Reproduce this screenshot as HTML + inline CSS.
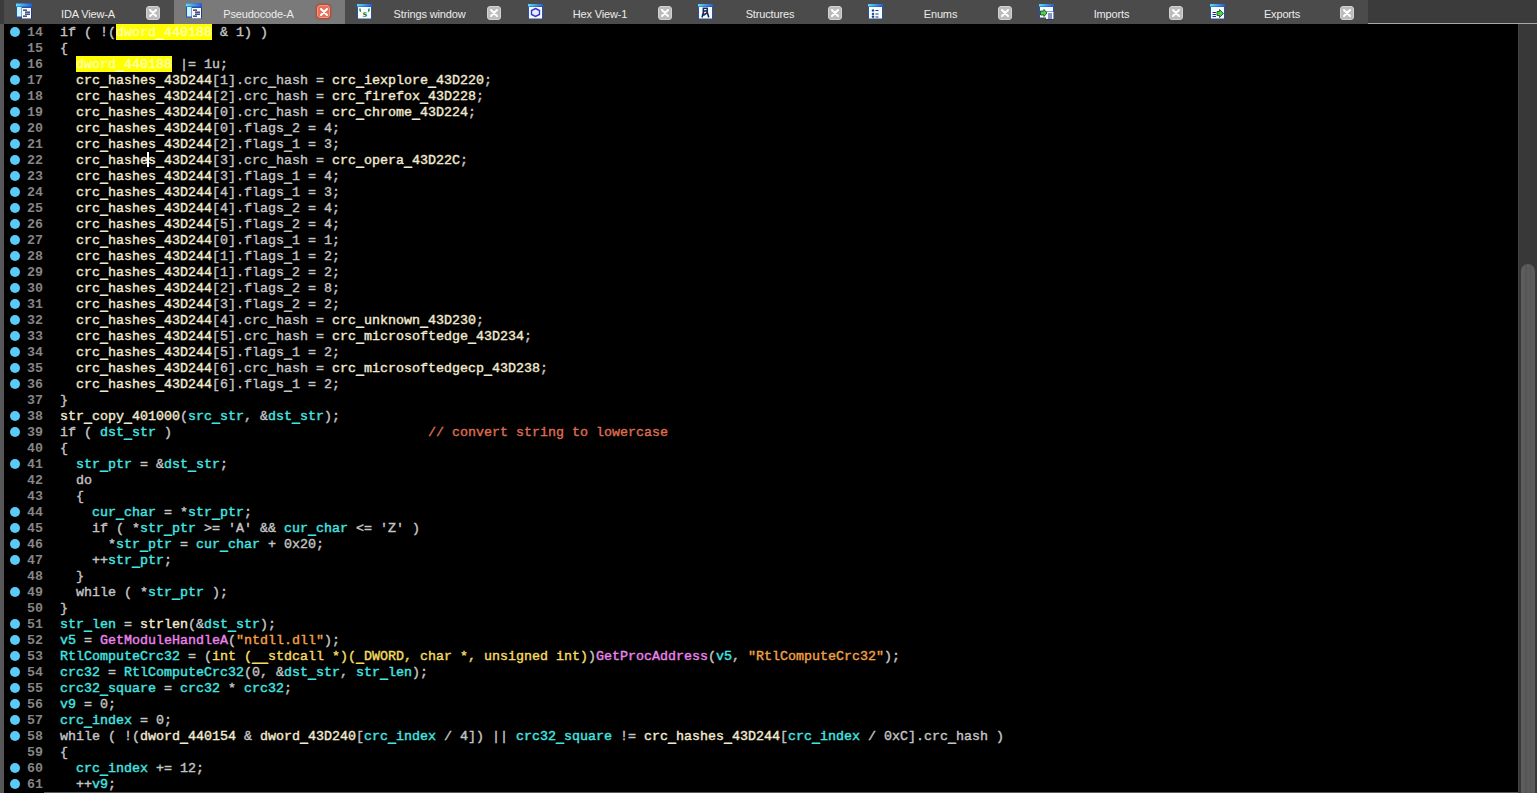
<!DOCTYPE html>
<html><head><meta charset="utf-8"><style>
*{margin:0;padding:0;box-sizing:border-box}
html,body{width:1537px;height:793px;overflow:hidden;background:#000}
body{position:relative;font-family:"Liberation Mono",monospace}
#bar{position:absolute;left:0;top:0;width:1537px;height:24px;background:#3b3b3b}
#barline{position:absolute;left:1368px;top:23px;width:169px;height:1px;background:#a8a8a8}
.tab{position:absolute;top:0;height:24px;background:#4b4b4b;font-family:"Liberation Sans",sans-serif;font-size:11px;color:#ececec;letter-spacing:-0.15px}
.tab.act{background:#7a7a7a}
.ic{position:absolute;left:12px;top:3px;width:17px;height:17px}
.ic svg{display:block}
.tt{position:absolute;left:-1px;width:100%;text-align:center;top:8px;line-height:13px}
.cl{position:absolute;left:142px;top:6px;width:14px;height:14px;border-radius:3px;background:#bcbcbc;border:1px solid #d2d2d2}
.cl.red{left:143px;top:5px;width:13px;height:13px;background:#e8705a;border-color:#f49a84;box-shadow:0 0 2px 1px #b84030}
.cl.red svg{left:-1.5px!important;top:-1.5px!important}
#lb{position:absolute;left:0;top:24px;width:4px;height:769px;background:#575757}
#ed{position:absolute;left:4px;top:24px;width:1514px;height:768px;background:#000}
#sb{position:absolute;left:1518px;top:24px;width:19px;height:769px;background:#383838;border-left:1px solid #444}
#th{position:absolute;left:1521px;top:264px;width:14px;height:529px;background:linear-gradient(90deg,#5e5e5e 0,#5c5c5c 4px,#565656 4px,#565656 6px,#5b5b5b 6px,#5b5b5b 9px,#565656 9px,#565656 10px,#5c5c5c 10px);border-radius:7px 7px 0 0}
#bl{position:absolute;left:44px;top:792px;width:1474px;height:1px;background:#5a5a5a}
.d{position:absolute;left:10px;width:10px;height:10px;border-radius:50%;background:#5ccaf6}
.n{position:absolute;left:24px;width:19px;text-align:right;font-weight:bold;color:#858585;font-size:13.333px;line-height:16px;height:16px}
.ln{position:absolute;left:60px;white-space:pre;font-weight:normal;-webkit-text-stroke-width:0.4px;font-size:13.333px;line-height:16px;height:16px;color:#c4c4c4}
.g{color:#f2ead0}
.l{color:#44e6e2}
.f{color:#ec84ee}
.s{color:#f2a046}
.t{color:#f4dc62}
.c{color:#de6c50}
.h{background:#ffff00;color:#ffffa8;display:inline-block;height:16px;vertical-align:top;margin-top:-1px;padding-top:1px}
#cur{position:absolute;left:147px;top:152px;width:2px;height:15px;background:#fff}
.ln u{text-decoration:none;position:relative;top:2px;text-shadow:0 -1px}
</style></head><body>
<div id="bar">
<div class="tab" style="left:4px;width:170px"><span class="ic"><svg width="17" height="17"><defs><linearGradient id="tg" x1="0" x2="1"><stop offset="0" stop-color="#58e0f8"/><stop offset="1" stop-color="#2a58d8"/></linearGradient></defs><rect x="0" y="0.5" width="16" height="14" fill="#2a4fa8"/><rect x="0" y="0.5" width="16" height="3" fill="url(#tg)"/><rect x="1" y="4" width="4.5" height="9.5" fill="#c8f6ff"/><rect x="6" y="5" width="9.5" height="11" fill="#1a2a70"/><rect x="6" y="5" width="9" height="10.5" fill="#fafcff"/><g fill="#1e3070"><rect x="7" y="6.5" width="4" height="1.3"/><rect x="9" y="8.5" width="5" height="1.3"/><rect x="9" y="10.5" width="5" height="1.3"/><rect x="7" y="12.5" width="4" height="1.3"/></g></svg></span><span class="tt">IDA View-A</span><span class="cl"><svg width="14" height="14" style="position:absolute;left:-1px;top:-1px"><path d="M4 4 L10 10 M10 4 L4 10" stroke="#fff" stroke-width="2" stroke-linecap="round"/></svg></span></div>
<div class="tab act" style="left:174px;width:171px"><span class="ic"><svg width="17" height="17"><defs><linearGradient id="tg" x1="0" x2="1"><stop offset="0" stop-color="#58e0f8"/><stop offset="1" stop-color="#2a58d8"/></linearGradient></defs><rect x="0" y="0.5" width="16" height="14" fill="#2a4fa8"/><rect x="0" y="0.5" width="16" height="3" fill="url(#tg)"/><rect x="1" y="4" width="4.5" height="9.5" fill="#c8f6ff"/><rect x="6" y="5" width="9.5" height="11" fill="#1a2a70"/><rect x="6" y="5" width="9" height="10.5" fill="#fafcff"/><g fill="#1e3070"><rect x="7" y="6.5" width="4" height="1.3"/><rect x="9" y="8.5" width="5" height="1.3"/><rect x="9" y="10.5" width="5" height="1.3"/><rect x="7" y="12.5" width="4" height="1.3"/></g></svg></span><span class="tt">Pseudocode-A</span><span class="cl red"><svg width="14" height="14" style="position:absolute;left:-1px;top:-1px"><path d="M4 4 L10 10 M10 4 L4 10" stroke="#fff" stroke-width="2" stroke-linecap="round"/></svg></span></div>
<div class="tab" style="left:345px;width:171px"><span class="ic"><svg width="17" height="17"><defs><linearGradient id="tg" x1="0" x2="1"><stop offset="0" stop-color="#58e0f8"/><stop offset="1" stop-color="#2a58d8"/></linearGradient></defs><rect x="0" y="1" width="15" height="15" fill="#2a4fa8"/><rect x="0" y="1" width="15" height="2.5" fill="url(#tg)"/><rect x="1" y="4" width="13" height="11.5" fill="#f4fcff"/><text x="7.8" y="13.6" font-family="Liberation Serif" font-size="11" font-weight="bold" fill="#1a6e1a" text-anchor="middle">s</text><path d="M3.2 5.5 Q2.5 7 3.6 8.6 M11.8 5.5 Q12.5 7 11.4 8.6" stroke="#1a6e1a" stroke-width="1.3" fill="none"/></svg></span><span class="tt">Strings window</span><span class="cl"><svg width="14" height="14" style="position:absolute;left:-1px;top:-1px"><path d="M4 4 L10 10 M10 4 L4 10" stroke="#fff" stroke-width="2" stroke-linecap="round"/></svg></span></div>
<div class="tab" style="left:516px;width:170px"><span class="ic"><svg width="17" height="17"><defs><linearGradient id="tg" x1="0" x2="1"><stop offset="0" stop-color="#58e0f8"/><stop offset="1" stop-color="#2a58d8"/></linearGradient></defs><rect x="0" y="1" width="15" height="15" fill="#2a4fa8"/><rect x="0" y="1" width="15" height="2.5" fill="url(#tg)"/><rect x="1" y="4" width="13" height="11.5" fill="#f4fcff"/><polygon points="7.5,5.5 11.5,7.5 11.5,11.5 7.5,13.5 3.5,11.5 3.5,7.5" fill="#e8ecff" stroke="#3a36c8" stroke-width="1.4"/></svg></span><span class="tt">Hex View-1</span><span class="cl"><svg width="14" height="14" style="position:absolute;left:-1px;top:-1px"><path d="M4 4 L10 10 M10 4 L4 10" stroke="#fff" stroke-width="2" stroke-linecap="round"/></svg></span></div>
<div class="tab" style="left:686px;width:170px"><span class="ic"><svg width="17" height="17"><defs><linearGradient id="tg" x1="0" x2="1"><stop offset="0" stop-color="#58e0f8"/><stop offset="1" stop-color="#2a58d8"/></linearGradient></defs><rect x="0" y="1" width="15" height="15" fill="#2a4fa8"/><rect x="0" y="1" width="15" height="2.5" fill="url(#tg)"/><rect x="1" y="4" width="13" height="11.5" fill="#f4fcff"/><rect x="5.3" y="5.3" width="4" height="2.6" fill="#fff" stroke="#182a58" stroke-width="1.5"/><path d="M5.6 8.5 L4.2 13.8 M9 8.5 L10.6 13.8 M5.8 12 L9 9.8" stroke="#182a58" stroke-width="1.6" fill="none" stroke-linecap="round"/></svg></span><span class="tt">Structures</span><span class="cl"><svg width="14" height="14" style="position:absolute;left:-1px;top:-1px"><path d="M4 4 L10 10 M10 4 L4 10" stroke="#fff" stroke-width="2" stroke-linecap="round"/></svg></span></div>
<div class="tab" style="left:856px;width:171px"><span class="ic"><svg width="17" height="17"><defs><linearGradient id="tg" x1="0" x2="1"><stop offset="0" stop-color="#58e0f8"/><stop offset="1" stop-color="#2a58d8"/></linearGradient></defs><rect x="0" y="1" width="15" height="15" fill="#2a4fa8"/><rect x="0" y="1" width="15" height="2.5" fill="url(#tg)"/><rect x="1" y="4" width="13" height="11.5" fill="#f4fcff"/><g fill="#1a3a80"><path d="M5 6 L6.5 7.5 L5 9 L3.5 7.5Z"/><path d="M5 9.5 L6.5 11 L5 12.5 L3.5 11Z"/><path d="M5 13 L6.5 14.5 L5 16 L3.5 14.5Z" transform="translate(0,-0.8)"/><rect x="7.5" y="7" width="3" height="1"/><rect x="7.5" y="10.5" width="3" height="1"/><rect x="7.5" y="13.5" width="3" height="1"/></g></svg></span><span class="tt">Enums</span><span class="cl"><svg width="14" height="14" style="position:absolute;left:-1px;top:-1px"><path d="M4 4 L10 10 M10 4 L4 10" stroke="#fff" stroke-width="2" stroke-linecap="round"/></svg></span></div>
<div class="tab" style="left:1027px;width:171px"><span class="ic"><svg width="17" height="17"><defs><linearGradient id="tg" x1="0" x2="1"><stop offset="0" stop-color="#58e0f8"/><stop offset="1" stop-color="#2a58d8"/></linearGradient></defs><rect x="0" y="1" width="15" height="14" fill="#2a4fa8"/><rect x="0" y="1" width="15" height="2.5" fill="url(#tg)"/><rect x="1" y="4" width="13" height="4" fill="#f4fcff"/><rect x="1" y="8" width="6" height="6.5" fill="#f4fcff"/><rect x="7" y="8.5" width="8" height="8" fill="#1a2a70"/><rect x="7" y="8.5" width="7.5" height="7.5" fill="#f4fcff"/><g fill="#1e2e88"><rect x="9" y="10.5" width="4" height="1"/><rect x="9" y="12.5" width="4" height="1"/><rect x="9" y="14.5" width="4" height="1"/></g><path d="M1.5 8 L5 8 L5 6.5 L8 10 L5 13.5 L5 12 L1.5 12 Z" fill="#50d050" stroke="#104010" stroke-width="0.8"/></svg></span><span class="tt">Imports</span><span class="cl"><svg width="14" height="14" style="position:absolute;left:-1px;top:-1px"><path d="M4 4 L10 10 M10 4 L4 10" stroke="#fff" stroke-width="2" stroke-linecap="round"/></svg></span></div>
<div class="tab" style="left:1198px;width:170px"><span class="ic"><svg width="17" height="17"><defs><linearGradient id="tg" x1="0" x2="1"><stop offset="0" stop-color="#58e0f8"/><stop offset="1" stop-color="#2a58d8"/></linearGradient></defs><rect x="0" y="1" width="15" height="15" fill="#2a4fa8"/><rect x="0" y="1" width="15" height="2.5" fill="url(#tg)"/><rect x="1" y="4" width="13" height="11.5" fill="#f4fcff"/><g fill="#1e2e88"><rect x="2.5" y="9" width="3.5" height="1"/><rect x="2.5" y="11" width="3.5" height="1"/><rect x="2.5" y="13" width="3.5" height="1"/></g><path d="M7 8.5 L9.5 8.5 L9.5 6.5 L13.5 10.5 L9.5 14.5 L9.5 12.5 L7 12.5 Z" fill="#50d050" stroke="#104010" stroke-width="0.8"/></svg></span><span class="tt">Exports</span><span class="cl"><svg width="14" height="14" style="position:absolute;left:-1px;top:-1px"><path d="M4 4 L10 10 M10 4 L4 10" stroke="#fff" stroke-width="2" stroke-linecap="round"/></svg></span></div>
<div id="barline"></div>
</div>
<div id="lb"></div>
<div id="ed"></div>
<i class="d" style="top:27px"></i><b class="n" style="top:25px">14</b><div class="ln" style="top:25px">if ( !(<span class="h">dword<u>_</u>440188</span> &amp; 1) )</div>
<b class="n" style="top:41px">15</b><div class="ln" style="top:41px">{</div>
<i class="d" style="top:59px"></i><b class="n" style="top:57px">16</b><div class="ln" style="top:57px">  <span class="h">dword<u>_</u>440188</span> |= 1u;</div>
<i class="d" style="top:75px"></i><b class="n" style="top:73px">17</b><div class="ln" style="top:73px">  <span class="g">crc<u>_</u>hashes<u>_</u>43D244</span>[1].crc<u>_</u>hash = <span class="g">crc<u>_</u>iexplore<u>_</u>43D220</span>;</div>
<i class="d" style="top:91px"></i><b class="n" style="top:89px">18</b><div class="ln" style="top:89px">  <span class="g">crc<u>_</u>hashes<u>_</u>43D244</span>[2].crc<u>_</u>hash = <span class="g">crc<u>_</u>firefox<u>_</u>43D228</span>;</div>
<i class="d" style="top:107px"></i><b class="n" style="top:105px">19</b><div class="ln" style="top:105px">  <span class="g">crc<u>_</u>hashes<u>_</u>43D244</span>[0].crc<u>_</u>hash = <span class="g">crc<u>_</u>chrome<u>_</u>43D224</span>;</div>
<i class="d" style="top:123px"></i><b class="n" style="top:121px">20</b><div class="ln" style="top:121px">  <span class="g">crc<u>_</u>hashes<u>_</u>43D244</span>[0].flags<u>_</u>2 = 4;</div>
<i class="d" style="top:139px"></i><b class="n" style="top:137px">21</b><div class="ln" style="top:137px">  <span class="g">crc<u>_</u>hashes<u>_</u>43D244</span>[2].flags<u>_</u>1 = 3;</div>
<i class="d" style="top:155px"></i><b class="n" style="top:153px">22</b><div class="ln" style="top:153px">  <span class="g">crc<u>_</u>hashes<u>_</u>43D244</span>[3].crc<u>_</u>hash = <span class="g">crc<u>_</u>opera<u>_</u>43D22C</span>;</div>
<i class="d" style="top:171px"></i><b class="n" style="top:169px">23</b><div class="ln" style="top:169px">  <span class="g">crc<u>_</u>hashes<u>_</u>43D244</span>[3].flags<u>_</u>1 = 4;</div>
<i class="d" style="top:187px"></i><b class="n" style="top:185px">24</b><div class="ln" style="top:185px">  <span class="g">crc<u>_</u>hashes<u>_</u>43D244</span>[4].flags<u>_</u>1 = 3;</div>
<i class="d" style="top:203px"></i><b class="n" style="top:201px">25</b><div class="ln" style="top:201px">  <span class="g">crc<u>_</u>hashes<u>_</u>43D244</span>[4].flags<u>_</u>2 = 4;</div>
<i class="d" style="top:219px"></i><b class="n" style="top:217px">26</b><div class="ln" style="top:217px">  <span class="g">crc<u>_</u>hashes<u>_</u>43D244</span>[5].flags<u>_</u>2 = 4;</div>
<i class="d" style="top:235px"></i><b class="n" style="top:233px">27</b><div class="ln" style="top:233px">  <span class="g">crc<u>_</u>hashes<u>_</u>43D244</span>[0].flags<u>_</u>1 = 1;</div>
<i class="d" style="top:251px"></i><b class="n" style="top:249px">28</b><div class="ln" style="top:249px">  <span class="g">crc<u>_</u>hashes<u>_</u>43D244</span>[1].flags<u>_</u>1 = 2;</div>
<i class="d" style="top:267px"></i><b class="n" style="top:265px">29</b><div class="ln" style="top:265px">  <span class="g">crc<u>_</u>hashes<u>_</u>43D244</span>[1].flags<u>_</u>2 = 2;</div>
<i class="d" style="top:283px"></i><b class="n" style="top:281px">30</b><div class="ln" style="top:281px">  <span class="g">crc<u>_</u>hashes<u>_</u>43D244</span>[2].flags<u>_</u>2 = 8;</div>
<i class="d" style="top:299px"></i><b class="n" style="top:297px">31</b><div class="ln" style="top:297px">  <span class="g">crc<u>_</u>hashes<u>_</u>43D244</span>[3].flags<u>_</u>2 = 2;</div>
<i class="d" style="top:315px"></i><b class="n" style="top:313px">32</b><div class="ln" style="top:313px">  <span class="g">crc<u>_</u>hashes<u>_</u>43D244</span>[4].crc<u>_</u>hash = <span class="g">crc<u>_</u>unknown<u>_</u>43D230</span>;</div>
<i class="d" style="top:331px"></i><b class="n" style="top:329px">33</b><div class="ln" style="top:329px">  <span class="g">crc<u>_</u>hashes<u>_</u>43D244</span>[5].crc<u>_</u>hash = <span class="g">crc<u>_</u>microsoftedge<u>_</u>43D234</span>;</div>
<i class="d" style="top:347px"></i><b class="n" style="top:345px">34</b><div class="ln" style="top:345px">  <span class="g">crc<u>_</u>hashes<u>_</u>43D244</span>[5].flags<u>_</u>1 = 2;</div>
<i class="d" style="top:363px"></i><b class="n" style="top:361px">35</b><div class="ln" style="top:361px">  <span class="g">crc<u>_</u>hashes<u>_</u>43D244</span>[6].crc<u>_</u>hash = <span class="g">crc<u>_</u>microsoftedgecp<u>_</u>43D238</span>;</div>
<i class="d" style="top:379px"></i><b class="n" style="top:377px">36</b><div class="ln" style="top:377px">  <span class="g">crc<u>_</u>hashes<u>_</u>43D244</span>[6].flags<u>_</u>1 = 2;</div>
<b class="n" style="top:393px">37</b><div class="ln" style="top:393px">}</div>
<i class="d" style="top:411px"></i><b class="n" style="top:409px">38</b><div class="ln" style="top:409px"><span class="g">str<u>_</u>copy<u>_</u>401000</span>(<span class="l">src<u>_</u>str</span>, &amp;<span class="l">dst<u>_</u>str</span>);</div>
<i class="d" style="top:427px"></i><b class="n" style="top:425px">39</b><div class="ln" style="top:425px">if ( <span class="l">dst<u>_</u>str</span> )                                <span class="c">// convert string to lowercase</span></div>
<b class="n" style="top:441px">40</b><div class="ln" style="top:441px">{</div>
<i class="d" style="top:459px"></i><b class="n" style="top:457px">41</b><div class="ln" style="top:457px">  <span class="l">str<u>_</u>ptr</span> = &amp;<span class="l">dst<u>_</u>str</span>;</div>
<b class="n" style="top:473px">42</b><div class="ln" style="top:473px">  do</div>
<b class="n" style="top:489px">43</b><div class="ln" style="top:489px">  {</div>
<i class="d" style="top:507px"></i><b class="n" style="top:505px">44</b><div class="ln" style="top:505px">    <span class="l">cur<u>_</u>char</span> = *<span class="l">str<u>_</u>ptr</span>;</div>
<i class="d" style="top:523px"></i><b class="n" style="top:521px">45</b><div class="ln" style="top:521px">    if ( *<span class="l">str<u>_</u>ptr</span> &gt;= &#x27;A&#x27; &amp;&amp; <span class="l">cur<u>_</u>char</span> &lt;= &#x27;Z&#x27; )</div>
<i class="d" style="top:539px"></i><b class="n" style="top:537px">46</b><div class="ln" style="top:537px">      *<span class="l">str<u>_</u>ptr</span> = <span class="l">cur<u>_</u>char</span> + 0x20;</div>
<i class="d" style="top:555px"></i><b class="n" style="top:553px">47</b><div class="ln" style="top:553px">    ++<span class="l">str<u>_</u>ptr</span>;</div>
<b class="n" style="top:569px">48</b><div class="ln" style="top:569px">  }</div>
<i class="d" style="top:587px"></i><b class="n" style="top:585px">49</b><div class="ln" style="top:585px">  while ( *<span class="l">str<u>_</u>ptr</span> );</div>
<b class="n" style="top:601px">50</b><div class="ln" style="top:601px">}</div>
<i class="d" style="top:619px"></i><b class="n" style="top:617px">51</b><div class="ln" style="top:617px"><span class="l">str<u>_</u>len</span> = <span class="g">strlen</span>(&amp;<span class="l">dst<u>_</u>str</span>);</div>
<i class="d" style="top:635px"></i><b class="n" style="top:633px">52</b><div class="ln" style="top:633px"><span class="l">v5</span> = <span class="f">GetModuleHandleA</span>(<span class="s">&quot;ntdll.dll&quot;</span>);</div>
<i class="d" style="top:651px"></i><b class="n" style="top:649px">53</b><div class="ln" style="top:649px"><span class="l">RtlComputeCrc32</span> = (<span class="t">int (<u>_</u><u>_</u>stdcall *)(<u>_</u>DWORD, char *, unsigned int)</span>)<span class="f">GetProcAddress</span>(<span class="l">v5</span>, <span class="s">&quot;RtlComputeCrc32&quot;</span>);</div>
<i class="d" style="top:667px"></i><b class="n" style="top:665px">54</b><div class="ln" style="top:665px"><span class="l">crc32</span> = <span class="l">RtlComputeCrc32</span>(0, &amp;<span class="l">dst<u>_</u>str</span>, <span class="l">str<u>_</u>len</span>);</div>
<i class="d" style="top:683px"></i><b class="n" style="top:681px">55</b><div class="ln" style="top:681px"><span class="l">crc32<u>_</u>square</span> = <span class="l">crc32</span> * <span class="l">crc32</span>;</div>
<i class="d" style="top:699px"></i><b class="n" style="top:697px">56</b><div class="ln" style="top:697px"><span class="l">v9</span> = 0;</div>
<i class="d" style="top:715px"></i><b class="n" style="top:713px">57</b><div class="ln" style="top:713px"><span class="l">crc<u>_</u>index</span> = 0;</div>
<i class="d" style="top:731px"></i><b class="n" style="top:729px">58</b><div class="ln" style="top:729px">while ( !(<span class="g">dword<u>_</u>440154</span> &amp; <span class="g">dword<u>_</u>43D240</span>[<span class="l">crc<u>_</u>index</span> / 4]) || <span class="l">crc32<u>_</u>square</span> != <span class="g">crc<u>_</u>hashes<u>_</u>43D244</span>[<span class="l">crc<u>_</u>index</span> / 0xC].crc<u>_</u>hash )</div>
<b class="n" style="top:745px">59</b><div class="ln" style="top:745px">{</div>
<i class="d" style="top:763px"></i><b class="n" style="top:761px">60</b><div class="ln" style="top:761px">  <span class="l">crc<u>_</u>index</span> += 12;</div>
<i class="d" style="top:779px"></i><b class="n" style="top:777px">61</b><div class="ln" style="top:777px">  ++<span class="l">v9</span>;</div>
<div id="cur"></div>
<div id="sb"></div>
<div id="th"></div>
<div id="bl"></div>
</body></html>
